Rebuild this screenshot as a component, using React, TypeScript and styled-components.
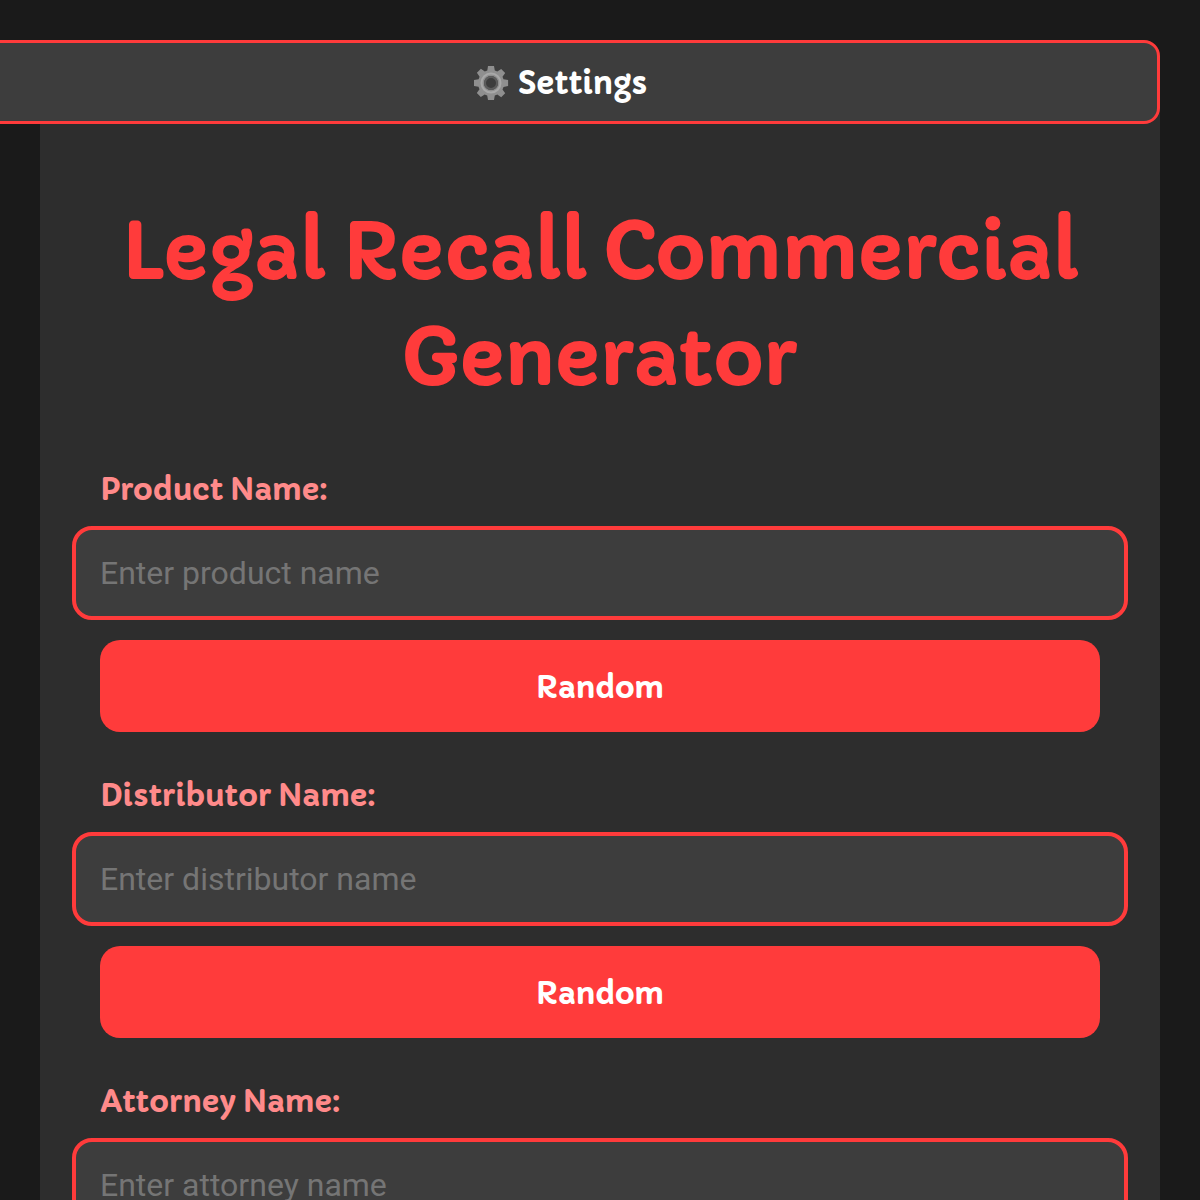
import styled, { createGlobalStyle } from "styled-components";

const GlobalStyle = createGlobalStyle`
  html, body {
    margin: 0;
    padding: 0;
    height: 1200px;
    overflow: hidden;
    background-color: #1a1a1a;
    font-family: "Roboto", sans-serif;
  }
  * {
    box-sizing: border-box;
  }
`;

const Page = styled.div`
  padding: 40px;
`;

const SettingsBar = styled.div`
  position: relative;
  display: flex;
  align-items: center;
  justify-content: center;
  gap: 9px;
  height: 84px;
  margin: 0 0 -20px -80px;
  padding-top: 2px;
  background-color: #3d3d3d;
  border: 3.5px solid #ff3b3b;
  border-radius: 16px;
  color: #fff;
  font-family: "Capriola", "Noto Sans", sans-serif;
  font-size: 31px;
  font-weight: 700;
`;

const Container = styled.div`
  display: flex;
  flex-direction: column;
  background-color: #2d2d2d;
  padding-bottom: 32px;
`;

const Title = styled.h1`
  margin: 95px 60px 53px;
  text-align: center;
  color: #ff3b3b;
  font-family: "Capriola", "Noto Sans", sans-serif;
  font-size: 77px;
  line-height: 106px;
  font-weight: 700;
`;

const Field = styled.div`
  display: flex;
  flex-direction: column;
  padding: 0 60px;
  margin-bottom: 38px;
`;

const Label = styled.label`
  color: #ff8a8a;
  font-family: "Capriola", "Noto Sans", sans-serif;
  font-size: 30px;
  line-height: 44px;
  font-weight: 700;
  margin: 3px 0 13px;
`;

const Input = styled.input`
  height: 94px;
  margin: 2px -28px 20px;
  padding: 0 24px;
  background-color: #3d3d3d;
  border: 4px solid #ff3b3b;
  border-radius: 20px;
  color: #fff;
  font-family: "Roboto", sans-serif;
  font-size: 32px;
  outline: none;

  &::placeholder {
    color: #757575;
    opacity: 1;
  }
`;

const RandomButton = styled.button`
  height: 92px;
  padding-top: 3px;
  border: none;
  border-radius: 20px;
  background-color: #ff3b3b;
  color: #fff;
  font-family: "Capriola", "Noto Sans", sans-serif;
  font-size: 30px;
  font-weight: 700;
`;

const Gear = () => (
  <svg width="36" height="36" viewBox="0 0 36 36" fill="#8f8f8f">
    <path
      fillRule="evenodd"
      d="M15 1h6l.8 4.600 2.500 1 3.900-2.700 4 4-2.700 3.900 1 2.500 4.600.8v6l-4.600.8-1 2.500 2.700 3.900-4 4-3.900-2.700-2.500 1L21 35h-6l-.8-4.600-2.500-1-3.900 2.700-4-4 2.700-3.900-1-2.500L1 21v-6l4.600-.8 1-2.500-2.700-3.900 4-4 3.900 2.700 2.500-1zM18 11a7 7 0 1 0 0 14 7 7 0 0 0 0-14z"
    />
    <circle cx="18" cy="18" r="9.500" fill="none" stroke="#a8a8a8" strokeWidth="2" />
    <circle cx="18" cy="18" r="6" fill="none" stroke="#5c5c5c" strokeWidth="2" />
  </svg>
);

const fields = [
  { label: "Product Name:", placeholder: "Enter product name" },
  { label: "Distributor Name:", placeholder: "Enter distributor name" },
  { label: "Attorney Name:", placeholder: "Enter attorney name" },
];

const App = () => (
  <>
    <GlobalStyle />
    <Page>
      <SettingsBar>
        <Gear />
        Settings
      </SettingsBar>
      <Container>
        <Title>Legal Recall Commercial Generator</Title>
        {fields.map((field) => (
          <Field key={field.label}>
            <Label>{field.label}</Label>
            <Input placeholder={field.placeholder} />
            <RandomButton>Random</RandomButton>
          </Field>
        ))}
      </Container>
    </Page>
  </>
);

export default App;
